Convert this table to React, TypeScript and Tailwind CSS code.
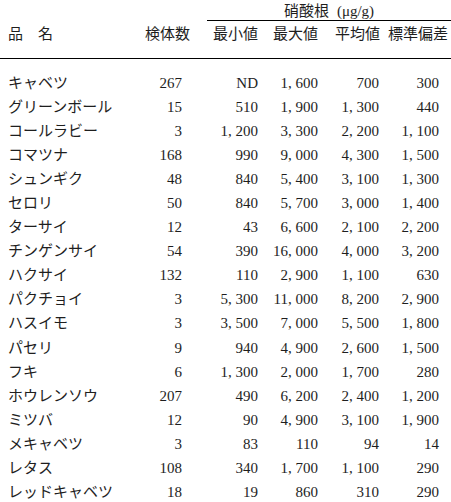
const rows: [string, string, string, string, string, string][] = [
  ["キャベツ", "267", "ND", "1, 600", "700", "300"],
  ["グリーンボール", "15", "510", "1, 900", "1, 300", "440"],
  ["コールラビー", "3", "1, 200", "3, 300", "2, 200", "1, 100"],
  ["コマツナ", "168", "990", "9, 000", "4, 300", "1, 500"],
  ["シュンギク", "48", "840", "5, 400", "3, 100", "1, 300"],
  ["セロリ", "50", "840", "5, 700", "3, 000", "1, 400"],
  ["ターサイ", "12", "43", "6, 600", "2, 100", "2, 200"],
  ["チンゲンサイ", "54", "390", "16, 000", "4, 000", "3, 200"],
  ["ハクサイ", "132", "110", "2, 900", "1, 100", "630"],
  ["パクチョイ", "3", "5, 300", "11, 000", "8, 200", "2, 900"],
  ["ハスイモ", "3", "3, 500", "7, 000", "5, 500", "1, 800"],
  ["パセリ", "9", "940", "4, 900", "2, 600", "1, 500"],
  ["フキ", "6", "1, 300", "2, 000", "1, 700", "280"],
  ["ホウレンソウ", "207", "490", "6, 200", "2, 400", "1, 200"],
  ["ミツバ", "12", "90", "4, 900", "3, 100", "1, 900"],
  ["メキャベツ", "3", "83", "110", "94", "14"],
  ["レタス", "108", "340", "1, 700", "1, 100", "290"],
  ["レッドキャベツ", "18", "19", "860", "310", "290"],
];

export default function App() {
  return (
    <div
      className="w-[451px] h-[502px] overflow-hidden bg-white text-[15px] text-[#1e1e1e]"
      style={{ fontFamily: '"Liberation Serif", "Noto Sans CJK JP", serif' }}
    >
      {/* group header */}
      <div className="ml-[207px] h-[21px] border-b border-black pt-[3px] text-center leading-[17px] whitespace-pre">
        硝酸根<span className="ml-[8px]">(μg/g)</span>
      </div>

      {/* column headers */}
      <div className="grid h-[37.5px] grid-cols-[145px_45px_68px_60px_62px_68px] border-b-[1.5px] border-black pt-[5px] leading-[16px]">
        <div className="pl-[8px]">品　名</div>
        <div>検体数</div>
        <div className="text-right">最小値</div>
        <div className="text-right">最大値</div>
        <div className="text-right">平均値</div>
        <div className="text-right">標準偏差</div>
      </div>

      {/* data */}
      <div className="pt-[12px]">
        {rows.map((r) => (
          <div
            key={r[0]}
            className="grid h-[24.1px] grid-cols-[145px_37px_76px_60px_61px_60px] leading-[24px]"
          >
            <div className="pl-[8px] whitespace-nowrap">{r[0]}</div>
            <div className="text-right">{r[1]}</div>
            <div className="text-right whitespace-pre">{r[2]}</div>
            <div className="text-right whitespace-pre">{r[3]}</div>
            <div className="text-right whitespace-pre">{r[4]}</div>
            <div className="text-right whitespace-pre">{r[5]}</div>
          </div>
        ))}
      </div>
    </div>
  );
}
